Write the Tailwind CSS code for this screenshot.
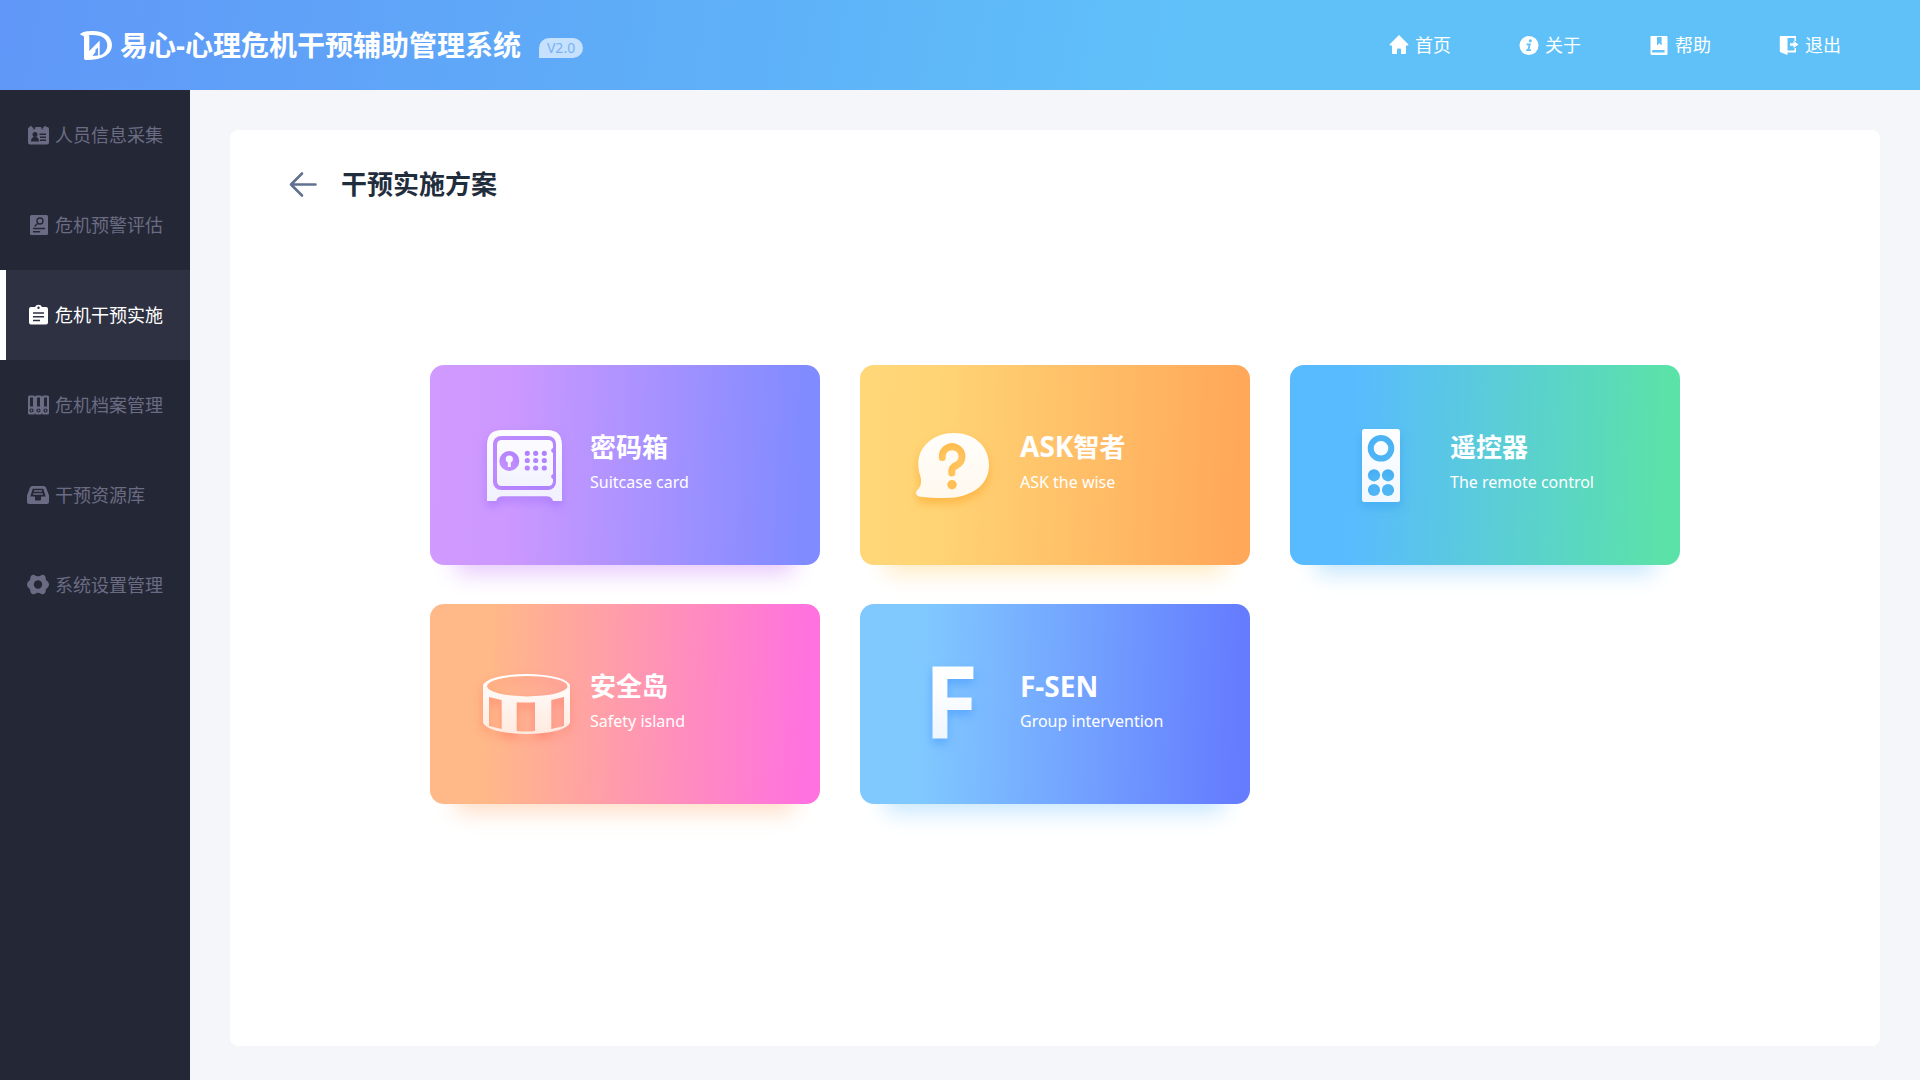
<!DOCTYPE html>
<html lang="zh-CN">
<head>
<meta charset="utf-8">
<meta name="viewport" content="width=device-width, initial-scale=1">
<title>易心-心理危机干预辅助管理系统</title>
<script src="https://cdn.jsdelivr.net/npm/@tailwindcss/browser@4"></script>
</head>
<body class="flex min-h-screen flex-col bg-[#f4f6fa] font-['Noto_Sans','Noto_Sans_CJK_SC',sans-serif]">

<header class="flex h-[90px] shrink-0 items-center justify-between bg-[linear-gradient(100deg,#6097f8_0%,#5eb0f8_38%,#60c1f9_62%,#60c1f9_100%)] pl-20 pr-[79px] text-white">
  <div class="flex items-center">
    <svg class="size-8 shrink-0" viewBox="0 0 32 32" fill="#fff" aria-hidden="true">
      <path fill-rule="evenodd" d="M0 5.500C2 2.500 7 2 13 2C24 2 32 7.500 32 16C32 25 23 31 6.500 31C4.500 31 4 30.500 4 28.500V8C3.500 6.500 1.500 6 0 5.500ZM8.700 6.200C9.200 6.500 9.300 7.500 9.300 8.500V22L19.700 11.500V26.500C24.500 25 27.300 21 27.300 16C27.300 9 20 4.800 8.700 6.200ZM18 18.500L14.800 21.500L16 22L12.500 27L18 26.500Z"/>
    </svg>
    <h1 class="ml-2 text-[28px] font-bold leading-10">易心-心理危机干预辅助管理系统</h1>
    <span class="ml-[18px] mt-1.5 flex h-5 items-center rounded-[10px] rounded-bl-none bg-[#c5e1fd] px-2 text-sm text-[#78b2f6]">V2.0</span>
  </div>
  <nav class="flex items-center gap-[68px] text-lg leading-6" aria-label="顶部导航">
    <a href="#home" class="flex items-center gap-1.5">
      <svg class="size-5" viewBox="0 0 20 20" fill="#fff" aria-hidden="true"><path d="M10 0 19.500 9.500Q19.500 10.500 18.500 10.500H17V18Q17 19 16 19H12V14.500Q12 13.500 11 13.500H9Q8 13.500 8 14.500V19H4Q3 19 3 18V10.500H1.500Q.5 10.500 .5 9.500Z"/></svg>
      <span>首页</span>
    </a>
    <a href="#about" class="flex items-center gap-1.5">
      <svg class="size-5" viewBox="0 0 20 20" aria-hidden="true"><circle cx="10" cy="10.500" r="9.500" fill="#fff"/><circle cx="11.300" cy="5.800" r="1.500" fill="#60c0f8"/><path d="M7.500 9.300H10.800L9.200 15.200H12M7.200 15.200H10" fill="none" stroke="#60c0f8" stroke-width="1.800"/></svg>
      <span>关于</span>
    </a>
    <a href="#help" class="flex items-center gap-1.5">
      <svg class="size-5" viewBox="0 0 20 20" fill="#fff" aria-hidden="true"><path fill-rule="evenodd" d="M2 1H17.500Q18.500 1 18.500 2V19Q18.500 20 17.500 20H3Q1.500 20 1.500 18.500V2Q1.500 1 2 1ZM8 2V10.500L10.300 8.300L12.600 10.500V2ZM4 15Q3 15 3 16.200T4 17.600H15.600V15Z"/></svg>
      <span>帮助</span>
    </a>
    <a href="#logout" class="flex items-center gap-1.5">
      <svg class="size-5" viewBox="0 0 20 20" fill="#fff" aria-hidden="true"><path d="M1.500 1H17V6H15.500V3H8.500V15.500H15.500V13H17V17.500H8.500V20L2 17.500Q.8 17 .8 16V2Q.8 1 1.500 1ZM11 8.200H14.500V5.800L19.500 9.500L14.500 13V10.800H11Z"/></svg>
      <span>退出</span>
    </a>
  </nav>
</header>

<div class="flex flex-1">
  <aside class="w-[190px] shrink-0 bg-[#242735]">
    <nav class="flex flex-col text-lg leading-6 text-[#6b6c84]" aria-label="主导航">
      <a href="#collect" class="flex h-[90px] items-center gap-[6px] pl-[27px]">
        <svg class="size-[22px]" viewBox="0 0 22 22" aria-hidden="true"><path fill="currentColor" d="M3 3H4.500Q4.500 5.500 6.500 5.500T8.500 3H14Q14 5.500 16 5.500T18 3H20Q22 3 22 5V18.500Q22 20.500 20 20.500H3Q1 20.500 1 18.500V5Q1 3 3 3Z"/><path d="M3.500 2Q4 4.500 6.500 4.500M18.500 2Q18 4.500 15.500 4.500" stroke="currentColor" stroke-width="1.500" fill="none"/><g fill="#242735"><circle cx="8" cy="10.500" r="2.500"/><path d="M4 17.500Q4 13.500 7 13H9Q12 13.500 12 17.500ZM12.500 9.500H19V11H12.500ZM13 12.500H19V14H13ZM13 15.500H19V17H13Z"/></g></svg>
        <span>人员信息采集</span>
      </a>
      <a href="#assess" class="flex h-[90px] items-center gap-[6px] pl-[27px]">
        <svg class="size-[22px]" viewBox="0 0 22 22" aria-hidden="true"><rect x="3" y="1" width="18" height="20" rx="1.500" fill="currentColor"/><g fill="none" stroke="#242735" stroke-width="1.400" stroke-linecap="round"><circle cx="13" cy="7" r="3"/><path d="M10.800 9.200L8 12M6.500 14.500H17.500M6.500 17.800H12.500"/></g></svg>
        <span>危机预警评估</span>
      </a>
      <a href="#intervene" aria-current="page" class="flex h-[90px] items-center gap-[6px] border-l-[6px] border-white bg-[#2e3142] pl-[21px] text-white">
        <svg class="size-[22px]" viewBox="0 0 22 22" aria-hidden="true"><path fill="currentColor" fill-rule="evenodd" d="M4 3H8Q9 .8 11.500 .8T15 3H19Q21 3 21 5V18.500Q21 20.500 19 20.500H4Q2 20.500 2 18.500V5Q2 3 4 3ZM11.500 2.500A1.200 1.200 0 1 0 11.500 4.900A1.200 1.200 0 1 0 11.500 2.500Z"/><path d="M6 9H17M6 12.700H17M6 16.400H13" stroke="#2e3142" stroke-width="1.500"/></svg>
        <span>危机干预实施</span>
      </a>
      <a href="#archive" class="flex h-[90px] items-center gap-[6px] pl-[27px]">
        <svg class="size-[22px]" viewBox="0 0 22 22" aria-hidden="true"><g fill="currentColor"><rect x="1" y="1.500" width="7" height="19" rx="1.500"/><rect x="8" y="1.500" width="7" height="19" rx="1.500"/><rect x="15" y="1.500" width="7" height="19" rx="1.500"/></g><g fill="#242735"><path d="M3 3.500H6V12.500H3ZM10 3.500H13V12.500H10ZM17 3.500H20V12.500H17Z"/></g><g fill="none" stroke="#242735" stroke-width="1.200"><circle cx="4.500" cy="16.500" r="1.500"/><circle cx="11.500" cy="16.500" r="1.500"/><circle cx="18.500" cy="16.500" r="1.500"/></g></svg>
        <span>危机档案管理</span>
      </a>
      <a href="#resource" class="flex h-[90px] items-center gap-[6px] pl-[27px]">
        <svg class="size-[22px]" viewBox="0 0 22 22" aria-hidden="true"><path fill="currentColor" fill-rule="evenodd" d="M5.500 2H16.500Q18.500 2 19 3.500L22 11.500V18Q22 20 20 20H2Q0 20 0 18V11.500L3 3.500Q3.500 2 5.500 2ZM5.700 4.800L3.300 12.500H7.500Q8 12.500 8 13V15.500Q8 16.500 9 16.500H13Q14 16.500 14 15.500V13Q14 12.500 14.500 12.500H18.700L16.300 4.800Z"/><path d="M7 7H15M6.200 10H15.800" stroke="currentColor" stroke-width="1.400"/></svg>
        <span>干预资源库</span>
      </a>
      <a href="#settings" class="flex h-[90px] items-center gap-[6px] pl-[27px]">
        <svg class="size-[22px]" viewBox="0 0 22 22" aria-hidden="true"><path fill="currentColor" fill-rule="evenodd" d="M6 .8Q7.500 .6 8.500 1.700Q9.500 2.300 11 2.300T13.500 1.700Q14.500 .6 16 .8Q18 1.300 18.500 3Q18.300 6 20.500 7.300Q22 8.500 22 10.500T20.500 13.700Q18.300 15 18.500 18Q18 19.800 16 20.300Q14.500 20.400 13.500 19.400Q12.500 18.700 11 18.700T8.500 19.400Q7.500 20.400 6 20.300Q4 19.800 3.500 18Q3.700 15 1.500 13.700Q0 12.500 0 10.500T1.500 7.300Q3.700 6 3.500 3Q4 1.300 6 .8ZM11 6.300A4.200 4.200 0 1 0 11 14.700A4.200 4.200 0 1 0 11 6.300Z"/></svg>
        <span>系统设置管理</span>
      </a>
    </nav>
  </aside>

  <main class="flex min-w-0 flex-1 px-10 pb-[34px] pt-10">
    <section class="flex-1 rounded-lg bg-white px-[59px] pb-10 pt-[34px]">
      <div class="flex h-10 items-center gap-6">
        <button type="button" aria-label="返回" class="cursor-pointer">
          <svg class="size-7" viewBox="0 0 28 28" fill="none" stroke="#60728f" stroke-width="2.600" stroke-linecap="round" stroke-linejoin="round" aria-hidden="true"><path d="M26.500 14.500H2M13 3.500L2 14.500L13 25.500"/></svg>
        </button>
        <h2 class="text-[26px] font-bold leading-10 text-[#1f2d3d]">干预实施方案</h2>
      </div>

      <div class="mx-auto mt-[161px] grid max-w-[1250px] grid-cols-3 gap-x-10 gap-y-[39px]">
        <a href="#suitcase" class="flex h-[200px] items-center gap-[15px] rounded-[14px] bg-[linear-gradient(92deg,#d09aff_0%,#cd98ff_20%,#7f8bff_96%)] pl-[45px] text-white shadow-[0_34px_22px_-26px_#e6c6fb]">
          <svg class="size-[100px] shrink-0 drop-shadow-[0_5px_5px_#a070ffaa]" viewBox="0 0 100 100" aria-hidden="true">
            <defs><linearGradient id="g1" x2="0" y2="1"><stop stop-color="#fff"/><stop offset="1" stop-color="#eeeeff"/></linearGradient>
            <mask id="safe"><path fill="#fff" d="M12 86V30Q12 15 27 15H72Q87 15 87 30V86H78Q77 81.300 71 81.300H28Q22 81.300 21.300 86Z"/><rect x="18" y="21" width="63" height="54" rx="8" fill="#000"/><path fill="#fff" d="M27 25H73Q78 25 78 30V33A2.600 2.600 0 0 0 78 38V59A2.600 2.600 0 0 0 78 64V66Q78 71 73 71H27Q22 71 22 66V30Q22 25 27 25Z"/><circle cx="34.300" cy="46" r="10" fill="#000"/><circle cx="34.300" cy="44" r="3.600" fill="#fff"/><path d="M32.800 45H35.800V52H32.800Z" fill="#fff"/><path d="M52.300 38.300h0M60.700 38.300h0M69.300 38.300h0M52.300 45.500h0M60.700 45.500h0M69.300 45.500h0M52.300 53h0M60.700 53h0M69.300 53h0" stroke="#000" stroke-width="5.200" stroke-linecap="round"/></mask></defs>
            <rect width="100" height="100" fill="url(#g1)" mask="url(#safe)"/>
          </svg>
          <div class="pb-0.5">
            <h3 class="text-[26px] font-bold leading-9">密码箱</h3>
            <p class="text-base leading-[34px]">Suitcase card</p>
          </div>
        </a>

        <a href="#ask" class="flex h-[200px] items-center gap-[15px] rounded-[14px] bg-[linear-gradient(92deg,#ffd779_0%,#ffd475_20%,#ffa859_96%)] pl-[45px] text-white shadow-[0_34px_22px_-26px_#ffeac0]">
          <svg class="size-[100px] shrink-0 drop-shadow-[0_5px_5px_#ffa62aaa]" viewBox="0 0 100 100" aria-hidden="true">
            <defs><linearGradient id="g2" x2="0" y2="1"><stop stop-color="#fff"/><stop offset="1" stop-color="#fff7ea"/></linearGradient>
            <mask id="bubble"><path fill="#fff" d="M49 18C69 18 84 31 84 50C84 70 67 83 40 83C30 83 22 82.500 15 81.700C11 81.200 10 77.500 12 75.500C16 71.500 16.800 67 15.500 62C14.200 58 13.300 54 13.300 49C13.300 31 29 18 49 18Z"/><path d="M37.300 42.500V41.500A9.800 9.800 0 1 1 52 50Q46.800 52.500 46.800 56V58" fill="none" stroke="#000" stroke-width="7" stroke-linecap="round"/><circle cx="47" cy="69.700" r="4.700" fill="#000"/></mask></defs>
            <rect width="100" height="100" fill="url(#g2)" mask="url(#bubble)"/>
          </svg>
          <div class="pb-0.5">
            <h3 class="text-[26px] font-bold leading-9"><span class="text-[28px] leading-none">ASK</span>智者</h3>
            <p class="text-base leading-[34px]">ASK the wise</p>
          </div>
        </a>

        <a href="#remote" class="flex h-[200px] items-center gap-[15px] rounded-[14px] bg-[linear-gradient(92deg,#59bbff_0%,#59bbff_16%,#5be2a8_96%)] pl-[45px] text-white shadow-[0_34px_22px_-26px_#c2e5fd]">
          <svg class="size-[100px] shrink-0 drop-shadow-[0_5px_5px_#38a0f0aa]" viewBox="0 0 100 100" aria-hidden="true">
            <defs><linearGradient id="g3" x2="0" y2="1"><stop stop-color="#fff"/><stop offset="1" stop-color="#f0f7ff"/></linearGradient>
            <mask id="remote-shape"><rect x="27" y="14" width="38" height="73" rx="2.500" fill="#fff"/><circle cx="46" cy="33.300" r="10.300" fill="none" stroke="#000" stroke-width="6"/><circle cx="39" cy="60.300" r="6.100"/><circle cx="53" cy="60.300" r="6.100"/><circle cx="39" cy="75" r="6.100"/><circle cx="53" cy="75" r="6.100"/></mask></defs>
            <rect width="100" height="100" fill="url(#g3)" mask="url(#remote-shape)"/>
          </svg>
          <div class="pb-0.5">
            <h3 class="text-[26px] font-bold leading-9">遥控器</h3>
            <p class="text-base leading-[34px]">The remote control</p>
          </div>
        </a>

        <a href="#island" class="flex h-[200px] items-center gap-[15px] rounded-[14px] bg-[linear-gradient(92deg,#ffb888_0%,#ffb888_16%,#ff72df_96%)] pl-[45px] text-white shadow-[0_34px_22px_-26px_#ffdcc4]">
          <svg class="size-[100px] shrink-0 drop-shadow-[0_5px_5px_#ff8068aa]" viewBox="0 0 100 100" aria-hidden="true">
            <defs><linearGradient id="g4" x2="0" y2="1"><stop stop-color="#fff"/><stop offset="1" stop-color="#ffeadf"/></linearGradient></defs>
            <path fill="url(#g4)" fill-rule="evenodd" d="M8 32A43.500 12 0 0 1 95 32V68A43.500 12 0 0 1 8 68ZM12 32.200A40.300 10.200 0 0 0 92.600 32.200A40.300 10.200 0 0 0 12 32.200ZM14 43L26.700 46V75L14 72ZM41.700 48.200Q51 49 60 48.200V77Q51 78 41.700 77ZM76.300 46L89 43V72L76.300 75Z"/>
          </svg>
          <div class="pb-0.5">
            <h3 class="text-[26px] font-bold leading-9">安全岛</h3>
            <p class="text-base leading-[34px]">Safety island</p>
          </div>
        </a>

        <a href="#fsen" class="flex h-[200px] items-center gap-[15px] rounded-[14px] bg-[linear-gradient(92deg,#80c9ff_0%,#80c9ff_16%,#657cff_96%)] pl-[45px] text-white shadow-[0_34px_22px_-26px_#c5e6fd]">
          <span class="w-[100px] shrink-0 bg-linear-to-b from-white from-30% to-[#eef6ff] to-80% bg-clip-text pb-2.5 pr-2 text-center text-[100px] font-bold leading-[100px] text-transparent drop-shadow-[0_5px_5px_#4a9cffaa]" aria-hidden="true">F</span>
          <div class="pb-0.5">
            <h3 class="text-[28px] font-bold leading-9">F-SEN</h3>
            <p class="text-base leading-[34px]">Group intervention</p>
          </div>
        </a>
      </div>
    </section>
  </main>
</div>
</body>
</html>
